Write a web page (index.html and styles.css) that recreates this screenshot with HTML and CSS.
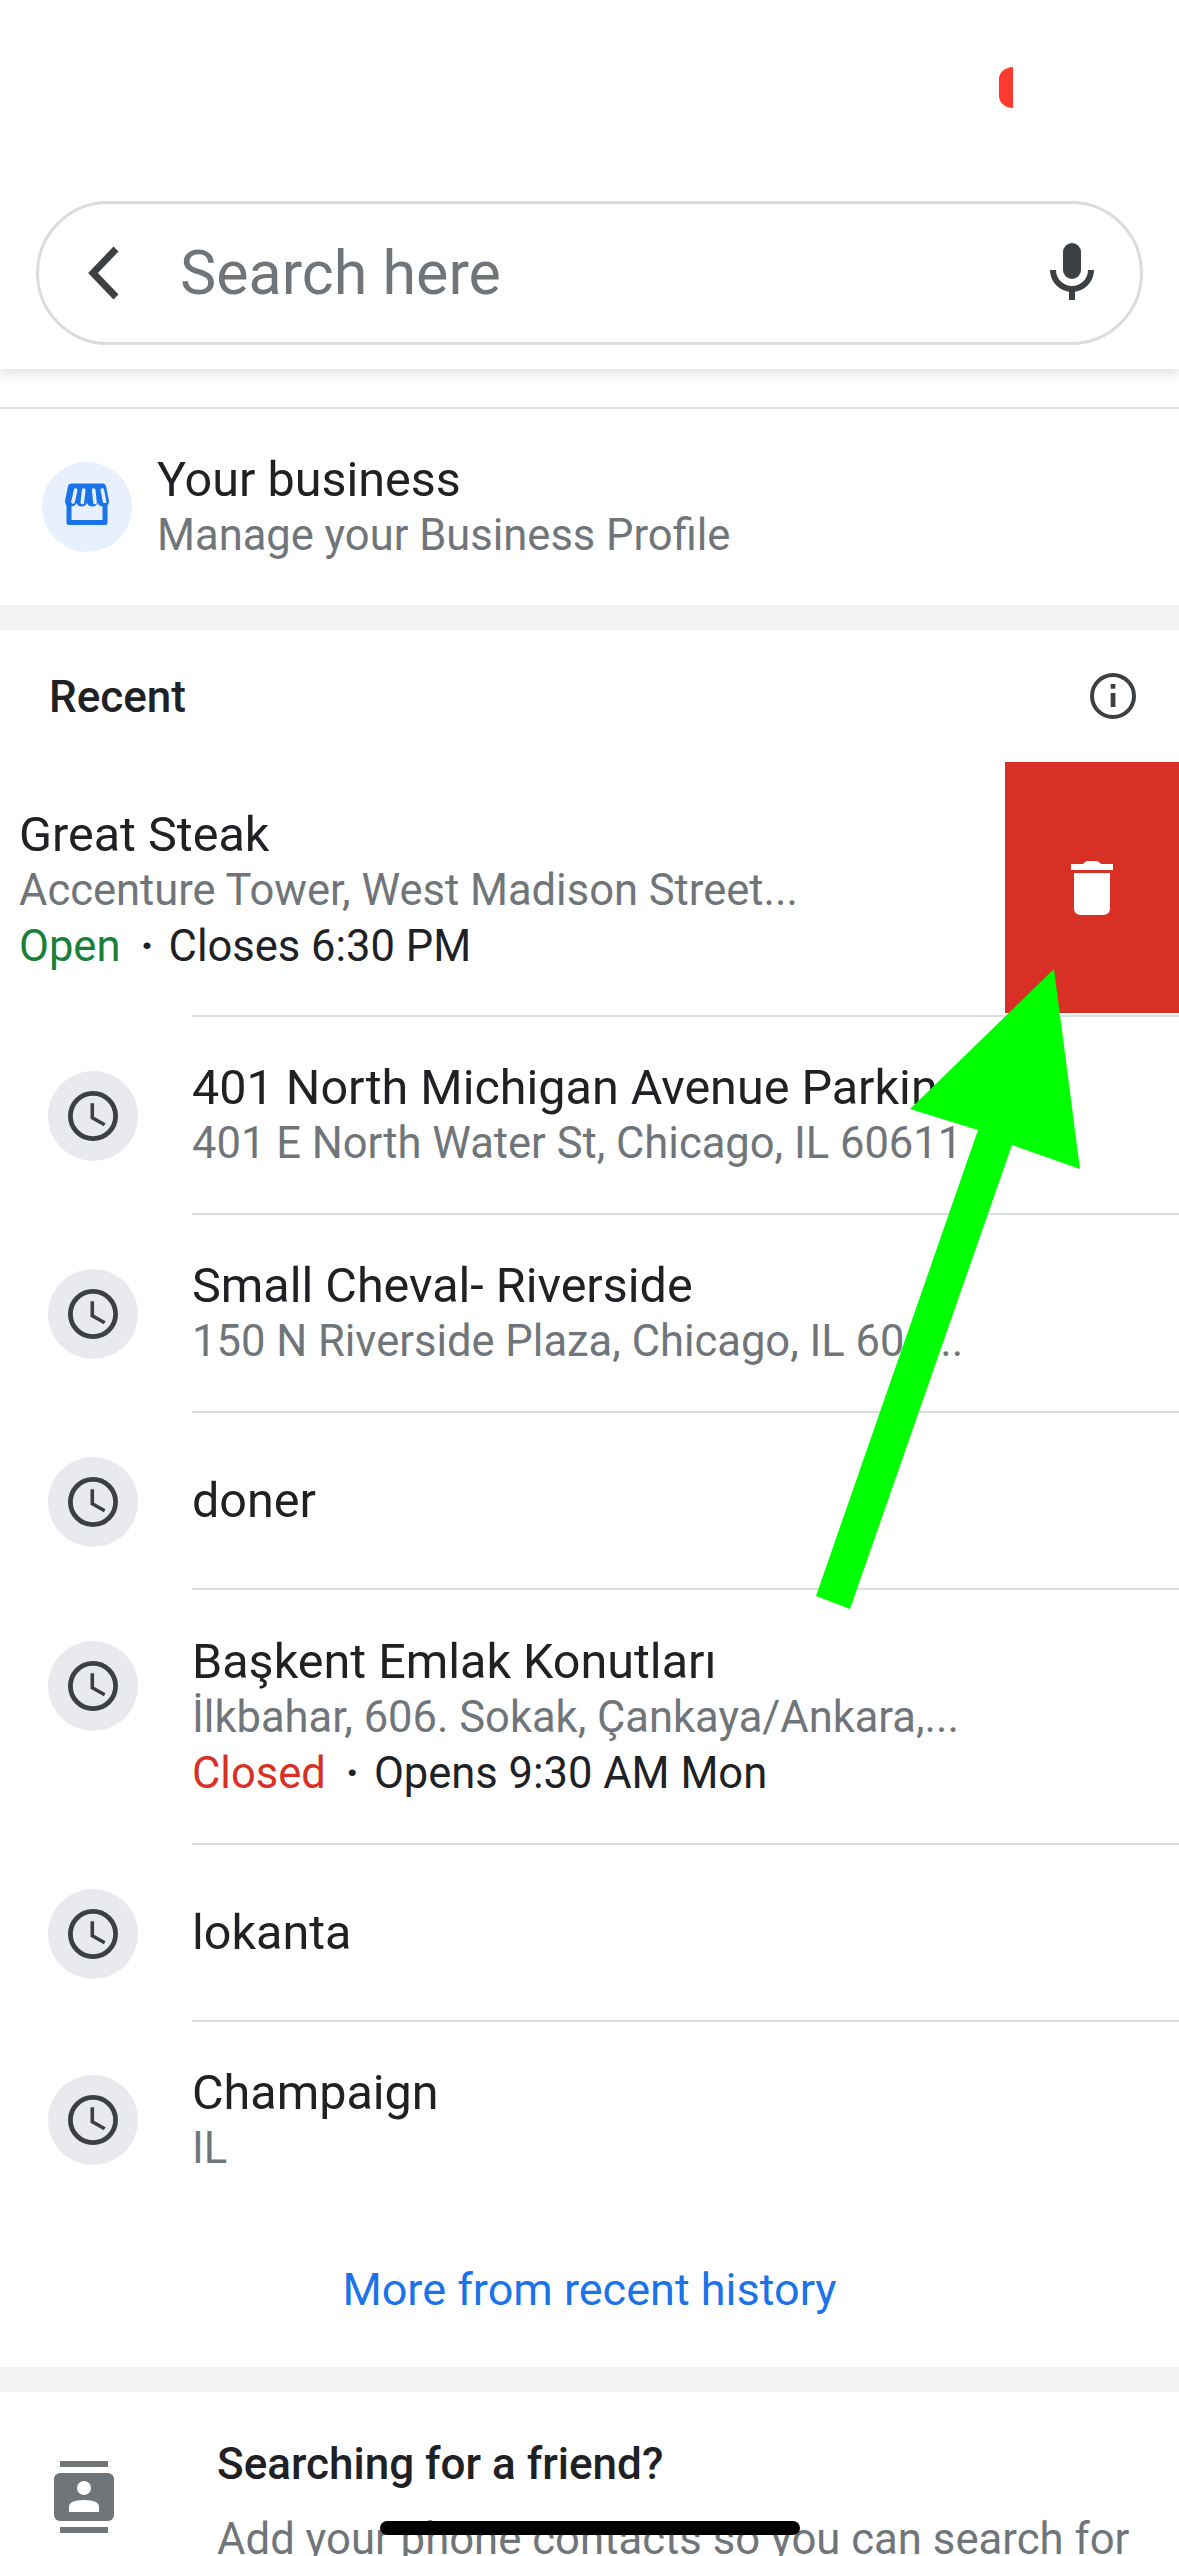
FILE: index.html
```html
<!DOCTYPE html>
<html lang="en">
<head>
<meta charset="utf-8">
<title>Search here</title>
<link rel="stylesheet" href="styles.css">
</head>
<body>
<div class="screen">
  <header class="header">
    <span class="rec-dot"></span>
    <div class="search">
      <svg class="back" width="40" height="64" viewBox="0 0 40 64"><path d="M30 8 L7 32 L30 56" fill="none" stroke="#3c4043" stroke-width="7"/></svg>
      <span class="search-text">Search here</span>
      <svg class="mic" width="48" height="60" viewBox="0 0 48 60"><rect x="15" y="0" width="18" height="36" rx="9" fill="#3c4043"/><path d="M5 27 A19 19 0 0 0 43 27" fill="none" stroke="#3c4043" stroke-width="6"/><rect x="21" y="44" width="6" height="13" fill="#3c4043"/></svg>
    </div>
  </header>

  <main>
    <section class="business">
      <div class="biz-badge">
        <svg width="48" height="48" viewBox="0 0 48 48"><path d="M2 18 L5 3 Q5.500 0.500 8 0.500 H40 Q42.500 0.500 43 3 L46 18 Q46 23.500 40.500 23.500 Q36 23.500 34.500 20 Q33 23.500 29.500 23.500 Q25.500 23.500 24 20 Q22.500 23.500 18.500 23.500 Q15 23.500 13.500 20 Q12 23.500 7.500 23.500 Q2 23.500 2 18 Z" fill="#1a73e8"/><path d="M12.700 7 L10 19 M20.700 7 L19.300 19.500 M30.700 7 L32 19.500 M39.300 7 L41.700 19" stroke="#e8f0fe" stroke-width="3.600" stroke-linecap="round"/><path d="M6 20 V39.500 H42 V20" fill="none" stroke="#1a73e8" stroke-width="5" stroke-linejoin="round"/></svg>
      </div>
      <div class="biz-text">
        <div class="title">Your business</div>
        <div class="sub">Manage your Business Profile</div>
      </div>
    </section>

    <section class="recent">
      <div class="recent-head">
        <h2 class="recent-title">Recent</h2>
        <svg class="info" width="46" height="46" viewBox="0 0 46 46"><circle cx="23" cy="23" r="21" fill="none" stroke="#3c4043" stroke-width="4"/><rect x="20.700" y="11" width="4.700" height="4.700" fill="#3c4043"/><rect x="20.700" y="20" width="4.700" height="14" fill="#3c4043"/></svg>
      </div>

      <div class="row row-swiped">
        <div class="slot"></div>
        <div class="body body-first">
          <div class="shift">
            <div class="title">Great Steak</div>
            <div class="sub">Accenture Tower, West Madison Street...</div>
            <div class="hours"><span class="open">Open</span><span class="dot">·</span>Closes 6:30 PM</div>
          </div>
        </div>
        <div class="delete">
          <svg width="42" height="54" viewBox="0 0 42 54"><path d="M0 3 H12 Q14 0 17 0 H25 Q28 0 30 3 H42 V9 H0 Z" fill="#fff"/><path d="M3 12 H39 V47 Q39 54 32 54 H10 Q3 54 3 47 Z" fill="#fff"/></svg>
        </div>
      </div>

      <div class="row">
        <div class="slot"><span class="clock"><svg width="52" height="52" viewBox="0 0 52 52"><circle cx="26" cy="26" r="22.600" fill="none" stroke="#3c4043" stroke-width="4.800"/><path d="M25.300 13.300 V27.700 L37.700 34.700" fill="none" stroke="#3c4043" stroke-width="3.600"/></svg></span></div>
        <div class="body">
          <div class="title">401 North Michigan Avenue Parking</div>
          <div class="sub">401 E North Water St, Chicago, IL 60611</div>
        </div>
      </div>

      <div class="row">
        <div class="slot"><span class="clock"><svg width="52" height="52" viewBox="0 0 52 52"><circle cx="26" cy="26" r="22.600" fill="none" stroke="#3c4043" stroke-width="4.800"/><path d="M25.300 13.300 V27.700 L37.700 34.700" fill="none" stroke="#3c4043" stroke-width="3.600"/></svg></span></div>
        <div class="body">
          <div class="title">Small Cheval- Riverside</div>
          <div class="sub">150 N Riverside Plaza, Chicago, IL 606...</div>
        </div>
      </div>

      <div class="row row-single">
        <div class="slot"><span class="clock"><svg width="52" height="52" viewBox="0 0 52 52"><circle cx="26" cy="26" r="22.600" fill="none" stroke="#3c4043" stroke-width="4.800"/><path d="M25.300 13.300 V27.700 L37.700 34.700" fill="none" stroke="#3c4043" stroke-width="3.600"/></svg></span></div>
        <div class="body">
          <div class="title">doner</div>
        </div>
      </div>

      <div class="row row-tall">
        <div class="slot"><span class="clock"><svg width="52" height="52" viewBox="0 0 52 52"><circle cx="26" cy="26" r="22.600" fill="none" stroke="#3c4043" stroke-width="4.800"/><path d="M25.300 13.300 V27.700 L37.700 34.700" fill="none" stroke="#3c4043" stroke-width="3.600"/></svg></span></div>
        <div class="body">
          <div class="title">Başkent Emlak Konutları</div>
          <div class="sub">İlkbahar, 606. Sokak, Çankaya/Ankara,...</div>
          <div class="hours"><span class="closed">Closed</span><span class="dot">·</span>Opens 9:30 AM Mon</div>
        </div>
      </div>

      <div class="row row-single">
        <div class="slot"><span class="clock"><svg width="52" height="52" viewBox="0 0 52 52"><circle cx="26" cy="26" r="22.600" fill="none" stroke="#3c4043" stroke-width="4.800"/><path d="M25.300 13.300 V27.700 L37.700 34.700" fill="none" stroke="#3c4043" stroke-width="3.600"/></svg></span></div>
        <div class="body">
          <div class="title">lokanta</div>
        </div>
      </div>

      <div class="row row-last">
        <div class="slot"><span class="clock"><svg width="52" height="52" viewBox="0 0 52 52"><circle cx="26" cy="26" r="22.600" fill="none" stroke="#3c4043" stroke-width="4.800"/><path d="M25.300 13.300 V27.700 L37.700 34.700" fill="none" stroke="#3c4043" stroke-width="3.600"/></svg></span></div>
        <div class="body">
          <div class="title">Champaign</div>
          <div class="sub">IL</div>
        </div>
      </div>

      <a class="more">More from recent history</a>
    </section>

    <section class="friend">
      <svg class="contacts" width="60" height="72" viewBox="0 0 60 72"><rect x="6" y="0" width="48" height="6" fill="#70757a"/><rect x="6" y="66" width="48" height="6" fill="#70757a"/><rect x="0" y="12" width="60" height="48" rx="6" fill="#70757a"/><circle cx="30" cy="27" r="7" fill="#fff"/><path d="M15 51 V46 Q15 39 30 39 Q45 39 45 46 V51 Z" fill="#fff"/></svg>
      <div class="friend-text">
        <div class="friend-title">Searching for a friend?</div>
        <div class="friend-sub">Add your phone contacts so you can search for</div>
      </div>
    </section>
  </main>

  <svg class="arrow" width="1179" height="2556" viewBox="0 0 1179 2556"><polygon points="1054,969 910,1109 978,1130 816,1596 850,1609 1012,1145 1080,1169" fill="#00ff00"/></svg>
  <div class="home-bar"></div>
</div>
</body>
</html>
```
FILE: styles.css
```css
* { box-sizing: border-box; }
html, body { margin: 0; padding: 0; background: #fff; }
body { font-family: Roboto, "Noto Sans", sans-serif; color: #202124; }

.screen { position: relative; width: 1179px; height: 2556px; overflow: hidden; background: #fff; }

.header {
  position: relative;
  z-index: 2;
  height: 369px;
  padding: 201px 36px 24px;
  background: #fff;
  box-shadow: 0 4px 12px rgba(60, 64, 67, 0.18);
}
.rec-dot {
  position: absolute;
  left: 999px;
  top: 67px;
  width: 14px;
  height: 41px;
  background: #ff3b30;
  border-radius: 14px 0 0 14px / 12px 0 0 12px;
}
.search {
  display: flex;
  align-items: center;
  height: 144px;
  padding: 0 44px 0 47px;
  border: 3px solid #dadce0;
  border-radius: 72px;
}
.back { flex: none; }
.search-text { flex: 1; margin-left: 54px; font-size: 61px; line-height: 64px; color: #70757a; }
.mic { flex: none; }

.business {
  display: flex;
  align-items: center;
  margin-top: 38px;
  padding-left: 42px;
  border-top: 2px solid #e0e2e6;
  border-bottom: 25px solid #f1f3f4;
  height: 223px;
}
.biz-badge {
  flex: none;
  display: flex;
  align-items: center;
  justify-content: center;
  width: 90px;
  height: 90px;
  border-radius: 50%;
  background: #e8f0fe;
}
.biz-text { margin-left: 25px; }

.title { font-size: 48.500px; line-height: 58px; color: #202124; }
.sub { font-size: 43.500px; line-height: 54px; color: #70757a; white-space: nowrap; }
.hours { font-size: 43.500px; line-height: 57px; color: #202124; }
.open { color: #188038; }
.closed { color: #d93025; }
.dot { display: inline-block; margin: 0 15px 0 20px; font-weight: 700; }

.recent-head {
  display: flex;
  align-items: center;
  justify-content: space-between;
  height: 132px;
  padding: 0 43px 0 49px;
}
.recent-title { margin: 2px 0 0; font-size: 44px; font-weight: 500; line-height: 54px; color: #202124; }

.row { position: relative; display: flex; align-items: center; }
.slot { flex: none; width: 192px; padding-left: 48px; }
.clock {
  display: flex;
  align-items: center;
  justify-content: center;
  width: 90px;
  height: 90px;
  border-radius: 50%;
  background: #e8eaed;
}
.body { flex: 1; min-width: 0; padding: 42px 0; border-bottom: 2px solid #dadce0; white-space: nowrap; }
.body-first { padding: 44px 0 40px; }
.shift { margin-left: -173px; }
.row-single .body { padding: 59px 0 58px; }
.row-tall { align-items: flex-start; }
.row-tall .slot { padding-top: 51px; }
.row-tall .body { padding: 43px 0 41px; }
.row-last .body { border-bottom: none; }

.delete {
  position: absolute;
  right: 0;
  top: 0;
  bottom: 4px;
  width: 174px;
  display: flex;
  align-items: center;
  justify-content: center;
  background: #d93025;
}

.more {
  display: block;
  height: 149px;
  padding-top: 45px;
  font-size: 45px;
  line-height: 54px;
  text-align: center;
  color: #1a73e8;
}

.friend {
  display: flex;
  align-items: flex-start;
  padding: 69px 0 0 54px;
  border-top: 25px solid #f1f3f4;
}
.contacts { flex: none; }
.friend-text { margin-left: 103px; margin-top: -24px; }
.friend-title { font-size: 44px; font-weight: 500; line-height: 54px; color: #202124; }
.friend-sub { margin-top: 21px; font-size: 43.700px; line-height: 54px; color: #70757a; white-space: nowrap; }

.arrow { position: absolute; left: 0; top: 0; z-index: 3; pointer-events: none; }
.home-bar {
  position: absolute;
  z-index: 4;
  left: 380px;
  top: 2521px;
  width: 420px;
  height: 14px;
  border-radius: 7px;
  background: #000;
}
```
